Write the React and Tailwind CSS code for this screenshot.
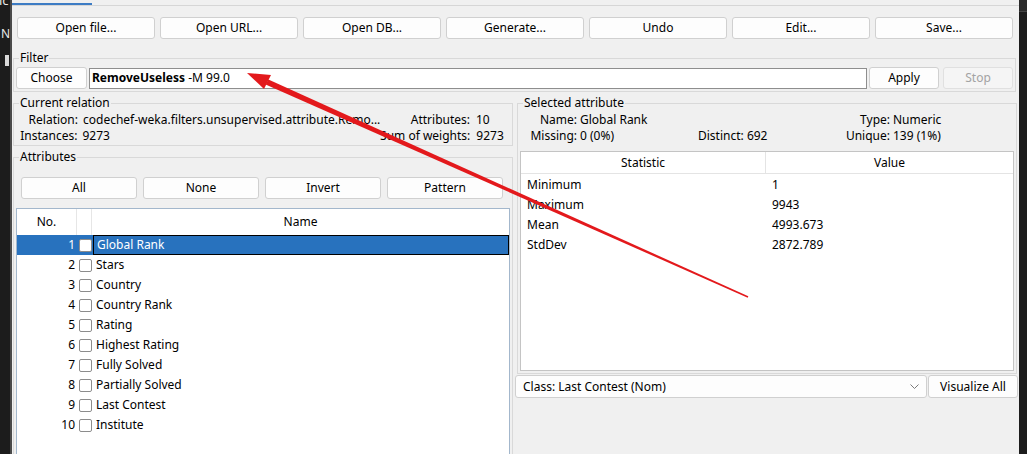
import React from "react";

function Btn({ className = "", children, disabled = false }) {
  return (
    <div
      className={
        "h-[22px] shrink-0 rounded-[3px] border flex items-center justify-center " +
        (disabled
          ? "border-[#e0e0e0] bg-[#f5f5f5] text-[#a3a3a3] "
          : "border-[#d0d0d0] bg-[#fdfdfd] text-black ") +
        className
      }
    >
      {children}
    </div>
  );
}

function Group({ title, className = "", children }) {
  return (
    <fieldset className={"min-w-0 border border-[#d9d9d9] " + className}>
      <legend className="ml-[5px] px-[1px] leading-[16px]">{title}</legend>
      {children}
    </fieldset>
  );
}

const attrs = [
  "Global Rank",
  "Stars",
  "Country",
  "Country Rank",
  "Rating",
  "Highest Rating",
  "Fully Solved",
  "Partially Solved",
  "Last Contest",
  "Institute",
];

const stats = [
  ["Minimum", "1"],
  ["Maximum", "9943"],
  ["Mean", "4993.673"],
  ["StdDev", "2872.789"],
];

export default function App() {
  return (
    <div className="relative w-[1027px] h-[454px] overflow-hidden flex items-start bg-[#1c1c1c] font-['Noto_Sans',sans-serif] text-[12px] leading-[16px] text-black">
      {/* left dark strip */}
      <div className="w-[12px] h-[454px] shrink-0 flex">
        <div className="w-[10px] overflow-hidden text-[#e8e8e8]">
          <div className="-mt-[8px] -ml-[1px] text-[13px] leading-[16px]">lc</div>
          <div className="mt-[18px] ml-[1px] text-[12px] leading-[16px]">N</div>
          <div className="mt-[13px] ml-[5px] w-[4px] h-[11px] bg-[#d8d8d8]" />
        </div>
        <div className="w-[2px] bg-[#4a4a4a]" />
      </div>

      {/* main window */}
      <div className="w-[1007px] h-[454px] shrink-0 bg-[#f0f0f0]">
        <div className="h-[6px] flex items-end border-b border-[#d6d6d6]">
          <div className="w-[80px] h-[2px] bg-[#3d7cc4]" />
        </div>

        {/* toolbar */}
        <div className="mt-[11px] flex gap-[5px] pl-[5px]">
          {["Open file...", "Open URL...", "Open DB...", "Generate...", "Undo", "Edit...", "Save..."].map((t) => (
            <Btn key={t} className="w-[138px]">
              {t}
            </Btn>
          ))}
        </div>

        {/* filter */}
        <Group title="Filter" className="mt-[11px] ml-[1px] mr-[3px]">
          <div className="flex items-center pl-[2px] pr-[2px] pt-[1px] pb-[2px]">
            <Btn className="w-[71px] h-[21px]">Choose</Btn>
            <div className="ml-[2px] flex-1 h-[21px] border border-[#8e8e8e] bg-white px-[2px] flex items-center whitespace-nowrap">
              <span className="font-bold">RemoveUseless</span>
              <span>&nbsp;-M 99.0</span>
            </div>
            <Btn className="ml-[2px] w-[70px] h-[21px]">Apply</Btn>
            <Btn disabled className="ml-[4px] w-[70px] h-[21px]">
              Stop
            </Btn>
          </div>
        </Group>

        {/* split */}
        <div className="mt-[3px] flex items-start">
          {/* left column */}
          <div className="w-[500px] ml-[1px] shrink-0">
            <Group title="Current relation">
              <div className="pt-[1px] pb-[1px]">
                <div className="flex h-[16px]">
                  <div className="w-[64px] text-right">Relation:</div>
                  <div className="ml-[5px] w-[300px] whitespace-nowrap overflow-hidden">
                    codechef-weka.filters.unsupervised.attribute.Remo...
                  </div>
                  <div className="flex-1 text-right">Attributes:</div>
                  <div className="ml-[6px] w-[36px]">10</div>
                </div>
                <div className="flex h-[16px]">
                  <div className="w-[64px] text-right">Instances:</div>
                  <div className="ml-[5px] w-[300px]">9273</div>
                  <div className="flex-1 text-right whitespace-nowrap">Sum of weights:</div>
                  <div className="ml-[6px] w-[36px]">9273</div>
                </div>
              </div>
            </Group>

            <Group title="Attributes" className="mt-[3px]">
              <div className="pt-[12px] pl-[7px] flex gap-[6px]">
                {["All", "None", "Invert", "Pattern"].map((t) => (
                  <Btn key={t} className="w-[116px] h-[21px]">
                    {t}
                  </Btn>
                ))}
              </div>
              <div className="mt-[9px] mx-[2px] h-[300px] border border-[#a3b7cc] bg-white">
                <div className="flex h-[26px] items-center">
                  <div className="w-[60px] h-full flex items-center justify-center border-r border-[#e6e6e6]">No.</div>
                  <div className="w-[15px] h-full border-r border-[#e6e6e6]" />
                  <div className="flex-1 text-center">Name</div>
                </div>
                {attrs.map((a, i) => {
                  const sel = i === 0;
                  return (
                    <div
                      key={a}
                      className={"flex h-[20px] items-center " + (sel ? "bg-[#2872be] text-white" : "")}
                    >
                      <div className="w-[61px] text-right pr-[3px]">{i + 1}</div>
                      <div className="w-[15px] flex items-center justify-center">
                        <div className="w-[13px] h-[13px] rounded-[2px] border border-[#8c8c8c] bg-white" />
                      </div>
                      <div
                        className={
                          "flex-1 h-full flex items-center pl-[3px] " + (sel ? "border border-black" : "")
                        }
                      >
                        {a}
                      </div>
                    </div>
                  );
                })}
              </div>
            </Group>
          </div>

          {/* right column */}
          <div className="flex-1 ml-[2px]">
            <Group title="Selected attribute" className="mx-[2px]">
              <div className="pt-[1px]">
                <div className="flex h-[16px] whitespace-nowrap">
                  <div className="w-[59px] text-right">Name:</div>
                  <div className="ml-[3px] w-[118px]">Global Rank</div>
                  <div className="w-[142px]" />
                  <div className="w-[50px] text-right">Type:</div>
                  <div className="ml-[3px]">Numeric</div>
                </div>
                <div className="flex h-[16px] whitespace-nowrap">
                  <div className="w-[59px] text-right">Missing:</div>
                  <div className="ml-[3px] w-[118px]">0 (0%)</div>
                  <div className="w-[142px]">Distinct: 692</div>
                  <div className="w-[50px] text-right">Unique:</div>
                  <div className="ml-[3px]">139 (1%)</div>
                </div>
              </div>
              <div className="mt-[7px] mx-[2px] mb-[2px] h-[220px] border border-[#c4c4c4] bg-white">
                <div className="flex h-[22px] border-b border-[#e4e4e4]">
                  <div className="w-[245px] flex items-center justify-center border-r border-[#e4e4e4]">Statistic</div>
                  <div className="flex-1 flex items-center justify-center">Value</div>
                </div>
                <div className="pt-[1px]">
                  {stats.map(([k, v]) => (
                    <div key={k} className="flex h-[20px] items-center">
                      <div className="w-[245px] pl-[6px]">{k}</div>
                      <div className="flex-1 pl-[6px]">{v}</div>
                    </div>
                  ))}
                </div>
              </div>
            </Group>

            <div className="mt-[1px] flex">
              <div className="w-[412px] h-[23px] rounded-[3px] border border-[#d0d0d0] bg-[#fdfdfd] flex items-center pl-[7px] pr-[7px]">
                <span className="flex-1">Class: Last Contest (Nom)</span>
                <svg width="9" height="6" viewBox="0 0 9 6" className="shrink-0">
                  <path d="M0.5 0.5 L4.5 4.5 L8.5 0.5" fill="none" stroke="#7a7a7a" strokeWidth="1" />
                </svg>
              </div>
              <Btn className="ml-[1px] w-[90px] h-[23px]">Visualize All</Btn>
            </div>
          </div>
        </div>
      </div>

      {/* right dark strip */}
      <div className="flex-1 h-[454px] bg-[#1c1c1c]">
        <div className="h-[12px] bg-[#2a2a2a] border-b border-[#444444]" />
      </div>

      {/* red annotation arrow */}
      <svg
        className="absolute left-0 top-0 pointer-events-none"
        width="1027"
        height="454"
        viewBox="0 0 1027 454"
      >
        <polygon points="265.6,84.4 268.4,79.6 748.3,296.3 747.7,297.7" fill="#e3191c" />
        <polygon points="247,73 271,75 264,89" fill="#e3191c" />
      </svg>
    </div>
  );
}
